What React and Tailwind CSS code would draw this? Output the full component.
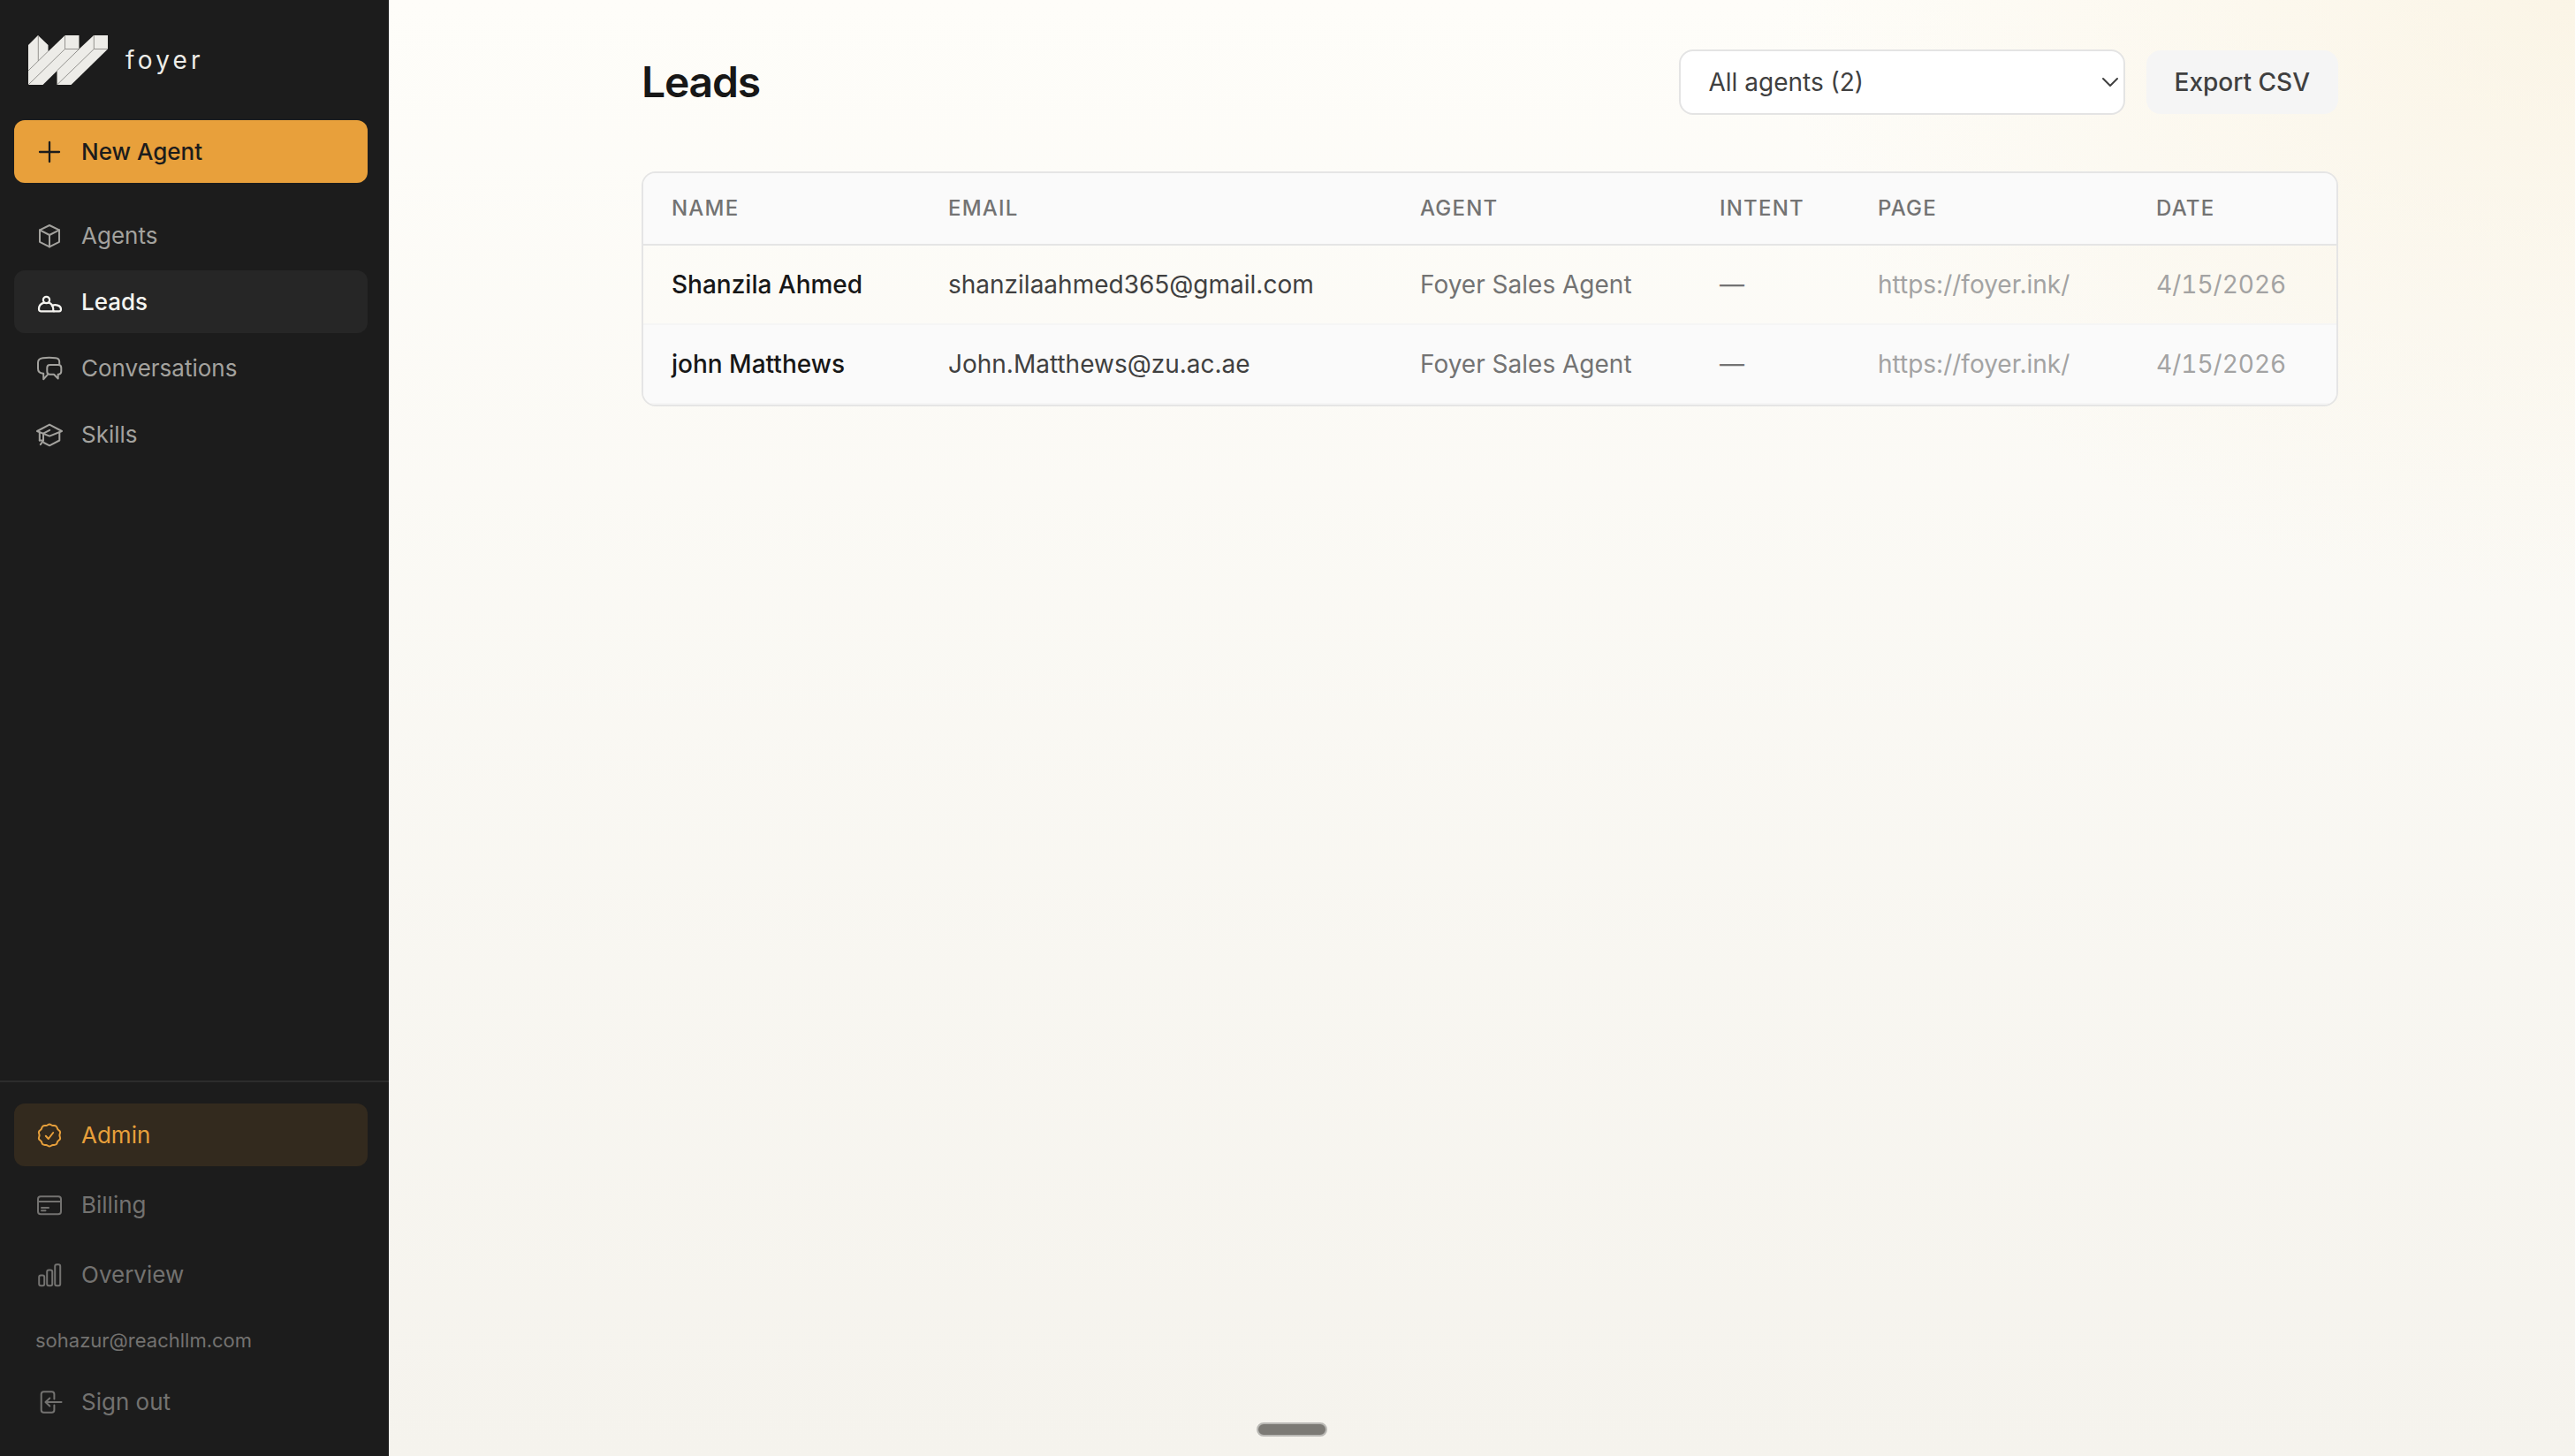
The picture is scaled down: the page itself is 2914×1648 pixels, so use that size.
import React, { useState } from "react";

const icons = {
    plus: <path d="M16 5v22M5 16h22" />,
    agents: (
        <>
            <path d="M16 4l11 5.4v13.4L16 28.4 5 22.8V9.4z" />
            <path d="M5 9.4l11 5.6 11-5.6M16 15v13.4" />
        </>
    ),
    leads: (
        <>
            <circle cx="12.5" cy="13.4" r="3.6" />
            <path d="M9.6 16.6c-3.5 1.2-5.6 4-5.6 7 0 1.6.6 2.7 2 2.7h15c-.8-.6-1-1.6-.8-3.2-.4-3-2.2-5.4-4.8-6.5-1.8.8-4 .8-5.8 0z" />
            <path d="M18.8 20.2c3.6-2 10.2-.8 10.2 3.8 0 1.5-.6 2.3-2 2.3h-6" />
        </>
    ),
    conversations: (
        <>
            <path d="M27.2 11V8.6C27.2 5.6 26 4.5 23 4.2c-4.6-.5-10-.5-14.6 0C4.5 4.6 3 6 3 9.5V16c0 3.500 1 5 4.500 5.400l1.700.3v6.600l4.600-5.100" />
            <path d="M16.5 12H26c2.3 0 3.3 1 3.3 3.3v4c0 2-.8 3.2-3 3.4l-.6.1v4.700L21 22.700h-4.500c-2.300 0-3.200-1.200-3.200-3.300v-4.100c0-2.300 1-3.300 3.200-3.300z" />
        </>
    ),
    skills: (
        <>
            <path d="M16 4.6L30 12l-14 5.6L2 12z" />
            <path d="M27.3 13.5v9L16 28.3 9.5 25M4.8 14v8.5" />
            <path d="M16.2 10.8L9 14.6v8.2l-3.2 4.4M4.8 22.5H9" />
        </>
    ),
    admin: (
        <>
            <path d="M16 3.5c1.500 0 2.300 1.500 3.800 1.600 1.400.1 2.700-.3 3.800.6 1.100.8.9 2.300 1.700 3.400.8 1.100 2.300 1.500 2.700 2.800.5 1.400-.6 2.600-.6 4.100s1.100 2.700.6 4.100c-.4 1.300-1.900 1.700-2.700 2.800-.8 1.100-.6 2.600-1.700 3.400-1.100.9-2.400.5-3.800.6-1.500.1-2.300 1.600-3.800 1.600s-2.300-1.500-3.800-1.600c-1.400-.1-2.700.3-3.800-.6-1.100-.8-.9-2.300-1.700-3.400-.8-1.100-2.300-1.500-2.700-2.800-.5-1.400.6-2.600.6-4.100s-1.100-2.700-.6-4.100c.4-1.300 1.900-1.700 2.700-2.800.8-1.100.6-2.600 1.700-3.400 1.100-.9 2.400-.5 3.800-.6 1.500-.1 2.300-1.600 3.800-1.600z" />
            <path d="M11.8 16.8l3 3.2 5.400-7" />
        </>
    ),
    billing: (
        <>
            <rect x="3" y="6.2" width="26" height="20" rx="3" />
            <path d="M3 12h26M7 19h8M7 22.2h4.500" />
        </>
    ),
    overview: (
        <>
            <rect x="4.2" y="16.4" width="6" height="11.8" rx="2" />
            <rect x="13.2" y="10.4" width="6" height="17.8" rx="2" />
            <rect x="22.2" y="4.2" width="6" height="24" rx="2" />
        </>
    ),
    signout: (
        <>
            <path d="M21.4 12.5V7c0-1.8-1-2.8-2.8-2.8H9.500C7.700 4.200 6.700 5.200 6.700 7v18c0 1.800 1 2.800 2.800 2.800h9.100c1.800 0 2.800-1 2.800-2.800v-5.500" />
            <path d="M29.5 16H12M16.3 11.5L11.5 16l4.800 4.500" />
        </>
    ),
};

function Icon({ name, strokeWidth }) {
    return (
        <svg
            className="size-8 shrink-0"
            viewBox="0 0 32 32"
            fill="none"
            stroke="currentColor"
            strokeWidth={strokeWidth}
            strokeLinecap="round"
            strokeLinejoin="round"
        >
            {icons[name]}
        </svg>
    );
}

function Logo() {
    return (
        <svg className="w-[90px] h-14" viewBox="0 0 90 56" fill="#edece8" stroke="#7d7c79" strokeWidth="0.8">
            <path stroke="none" d="M0 11L11 0l11.500 11v18L0 45z" />
            <path d="M11.300 1v28" />
            <path stroke="none" d="M32.500 39L74 0h16v15.500L48.500 56h-16z" />
            <path d="M32.500 39v17L74.300 15.500M74.300 0v15.500H90" fill="none" />
            <path stroke="none" d="M0 40L41.500 0h16v15.500L16.500 56H0z" />
            <path d="M0 40L22 18.500M0 56L41.500 15.500M41.500 0v15.500h16V0M57.500 15.500L32.500 40" fill="none" />
        </svg>
    );
}

function NavItem({ icon, label, className, strokeWidth = 2 }) {
    return (
        <a className={"flex h-[71px] items-center gap-5 rounded-xl px-6 text-[26px] " + className}>
            <Icon name={icon} strokeWidth={strokeWidth} />
            {label}
        </a>
    );
}

const leads = [
    {
        name: "Shanzila Ahmed",
        email: "shanzilaahmed365@gmail.com",
        agent: "Foyer Sales Agent",
        intent: "—",
        page: "https://foyer.ink/",
        date: "4/15/2026",
    },
    {
        name: "john Matthews",
        email: "John.Matthews@zu.ac.ae",
        agent: "Foyer Sales Agent",
        intent: "—",
        page: "https://foyer.ink/",
        date: "4/15/2026",
    },
];

export default function App() {
    const [rows] = useState(leads);

    return (
        <div className="flex h-screen w-full overflow-hidden font-['Inter',sans-serif] antialiased">
            {/*sidebar*/}
            <aside className="flex w-[440px] shrink-0 flex-col bg-[#1c1c1c]">
                <div className="flex h-[136px] items-center gap-5 px-8">
                    <Logo />
                    <span className="text-[28px] tracking-[4.2px] text-[#edece8]">foyer</span>
                </div>

                <nav className="flex flex-col gap-1 pl-4 pr-6">
                    <NavItem icon="plus" label="New Agent" strokeWidth={2.3} className="mb-5 bg-[#e8a03b] font-medium text-[#1c1c1c]" />
                    <NavItem icon="agents" label="Agents" className="text-[#a3a29e]" />
                    <NavItem icon="leads" label="Leads" strokeWidth={2.2} className="bg-[#262626] font-medium text-[#f5f4f0]" />
                    <NavItem icon="conversations" label="Conversations" className="text-[#a3a29e]" />
                    <NavItem icon="skills" label="Skills" className="text-[#a3a29e]" />
                </nav>

                <div className="mt-auto flex flex-col gap-2 border-t-2 border-[#2c2c2c] pb-[26px] pl-4 pr-6 pt-6">
                    <NavItem icon="admin" label="Admin" className="bg-[#332a1e] text-[#e8a03b]" />
                    <NavItem icon="billing" label="Billing" className="text-[#737270]" />
                    <NavItem icon="overview" label="Overview" className="text-[#737270]" />
                    <div className="flex h-[57px] items-center px-6 pt-1.5 text-[22px] text-[#737270]">
                        sohazur@reachllm.com
                    </div>
                    <NavItem icon="signout" label="Sign out" className="text-[#737270]" />
                </div>
            </aside>
            {/*sidebar*/}

            <main className="relative flex-1 bg-[radial-gradient(ellipse_900px_680px_at_100%_0%,rgba(248,238,215,0.55),rgba(248,238,215,0)_100%),linear-gradient(180deg,#fefdf9_0%,#f5f3ed_100%)] pl-[286px] pt-14">
                <div className="w-[1920px]">
                    <div className="flex h-[74px] items-center justify-between">
                        <h1 className="text-5xl font-semibold tracking-[-1.2px] text-[#171717]">Leads</h1>
                        <div className="flex items-center gap-6">
                            <div className="flex h-[74px] w-[505px] items-center justify-between rounded-2xl border-2 border-[#e4e4e4] bg-white pl-8 pr-[5px] text-[28px] text-[#404040]">
                                All agents (2)
                                <svg className="h-3 w-5" viewBox="0 0 20 12" fill="none" stroke="currentColor" strokeWidth="2" strokeLinecap="round" strokeLinejoin="round">
                                    <path d="M2 2l8 8 8-8" />
                                </svg>
                            </div>
                            <button className="h-[72px] rounded-2xl bg-[#f5f5f5] px-8 text-[28px] font-medium text-[#404040]">
                                Export CSV
                            </button>
                        </div>
                    </div>

                    {/*leads table*/}
                    <div className="mt-16 overflow-hidden rounded-2xl border-2 border-[#e5e5e5]">
                        <table className="w-full table-fixed text-left text-[28px]">
                            <colgroup>
                                <col className="w-[313px]" />
                                <col className="w-[534px]" />
                                <col className="w-[339px]" />
                                <col className="w-[179px]" />
                                <col className="w-[315px]" />
                                <col />
                            </colgroup>
                            <thead>
                                <tr className="h-[81px] border-b-2 border-[#e5e5e5] bg-[#fafafa] text-2xl tracking-[1.2px] text-[#737373]">
                                    <th className="px-8 pb-px font-medium">NAME</th>
                                    <th className="px-8 pb-px font-medium">EMAIL</th>
                                    <th className="px-8 pb-px font-medium">AGENT</th>
                                    <th className="px-8 pb-px font-medium">INTENT</th>
                                    <th className="px-8 pb-px font-medium">PAGE</th>
                                    <th className="px-8 pb-px font-medium">DATE</th>
                                </tr>
                            </thead>
                            <tbody>
                                {rows.map((row) => (
                                    <tr key={row.name} className="h-[90px] border-b-2 border-[#f5f5f5] even:bg-[#fafafa]">
                                        <td className="px-8 font-medium text-[#171717]">{row.name}</td>
                                        <td className="px-8 text-[#404040]">{row.email}</td>
                                        <td className="px-8 text-[#737373]">{row.agent}</td>
                                        <td className="px-8 text-[#737373]">{row.intent}</td>
                                        <td className="px-8 text-[#a3a3a3]">{row.page}</td>
                                        <td className="px-8 tabular-nums text-[#a3a3a3]">{row.date}</td>
                                    </tr>
                                ))}
                            </tbody>
                        </table>
                    </div>
                    {/*leads table*/}
                </div>

                {/*drag handle*/}
                <div className="absolute bottom-[22px] left-[982px] h-4 w-20 rounded-full border-2 border-[#b9b8b4] bg-[#7c7a75]" />
            </main>
        </div>
    );
}
